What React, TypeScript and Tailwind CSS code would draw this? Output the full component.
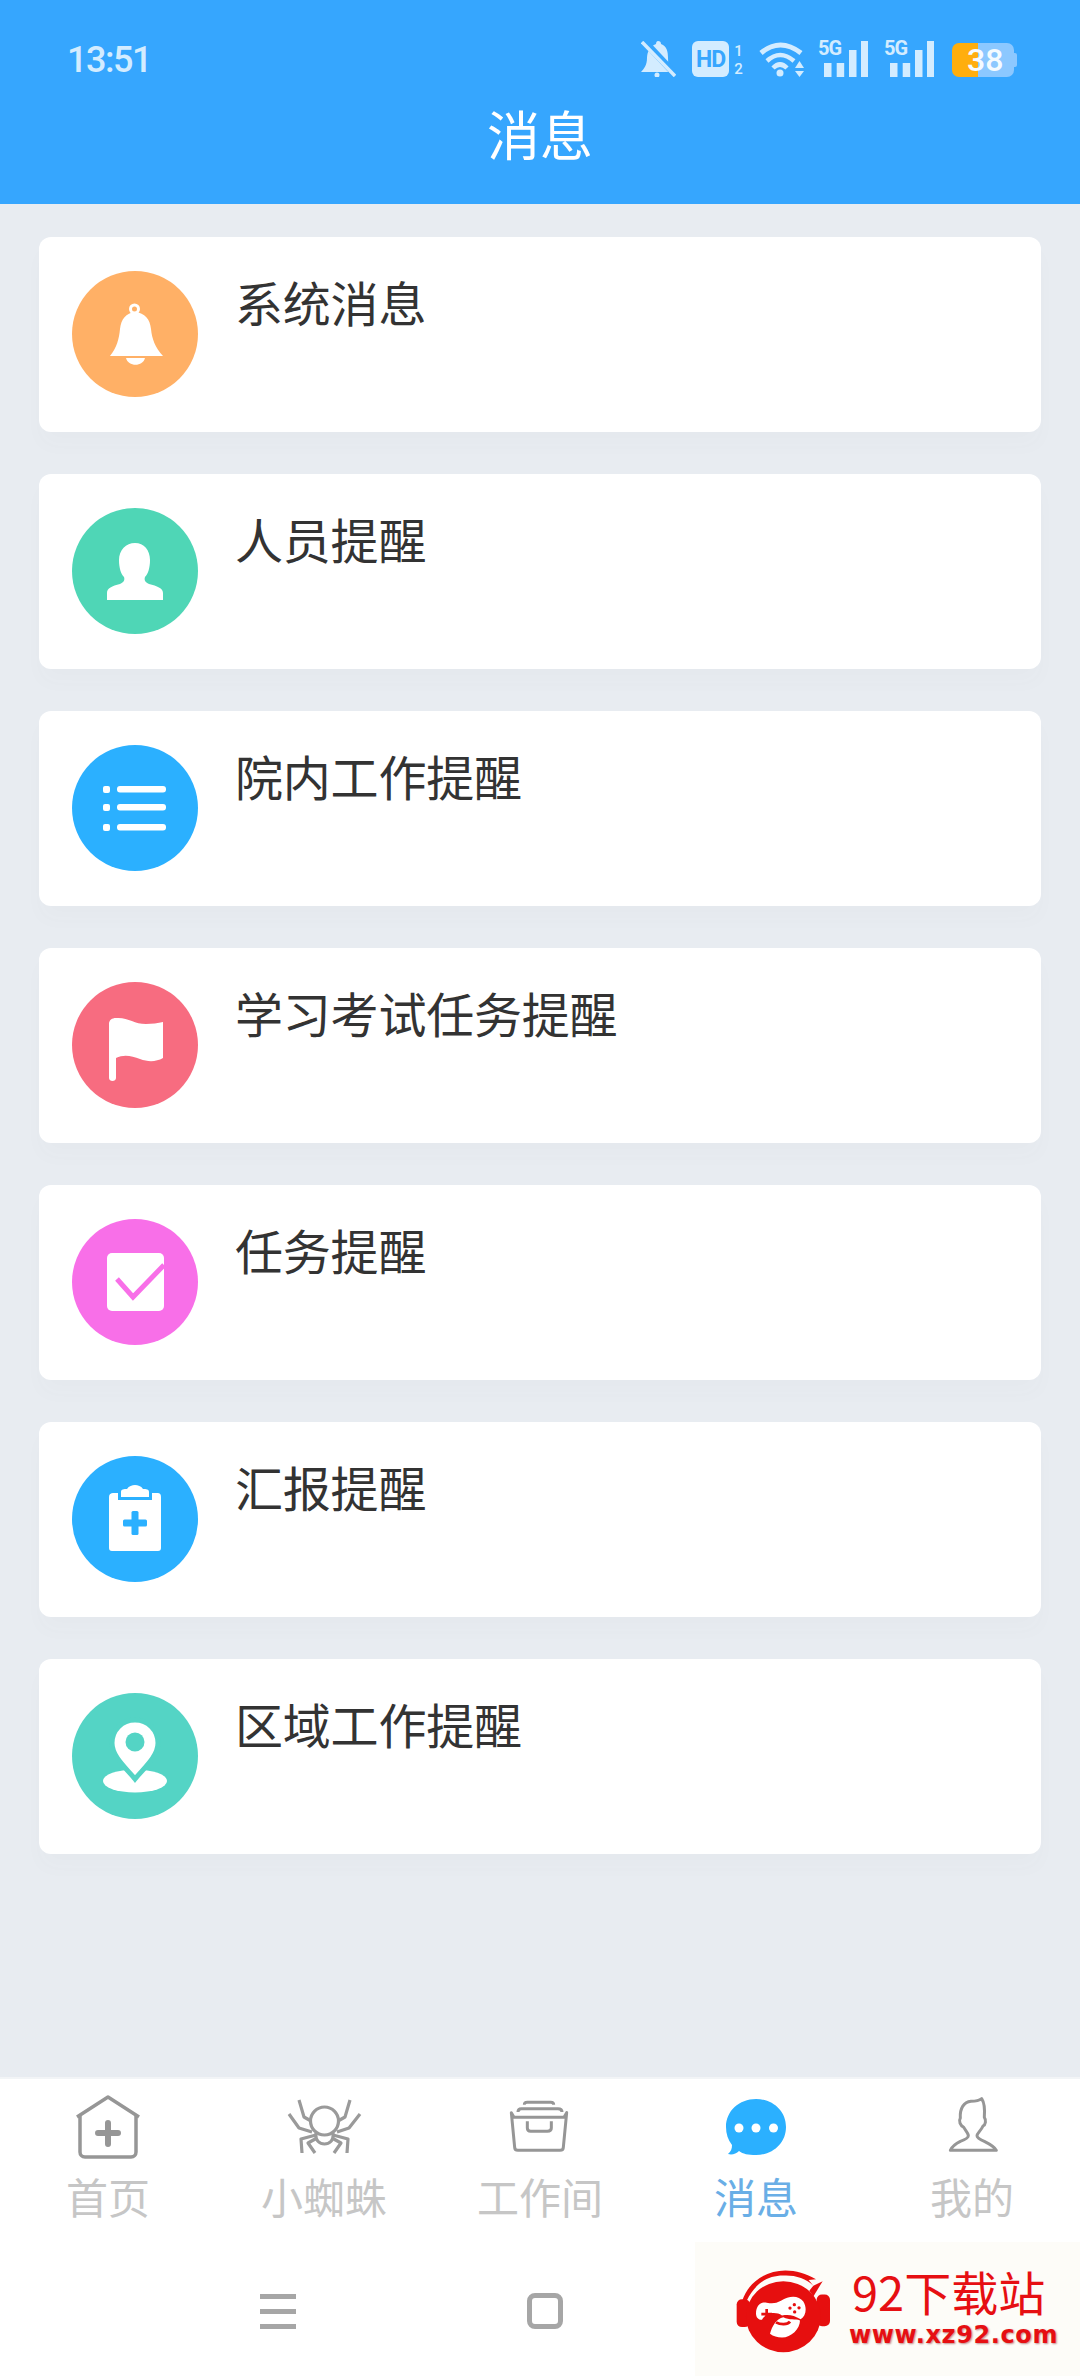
import React from 'react';

const cjk = "font-['Noto_Sans_CJK_SC',sans-serif]";

const BellIcon = () => (
  <svg viewBox="0 0 126 126" className="w-full h-full">
    <circle cx="62.5" cy="38" r="4" fill="none" stroke="#fff" strokeWidth="3" />
    <path d="M38 85C45 76 47 68 48 58C49 48 54 42 63 41C73 42 78 48 79 58C80 68 83 76 91 85Z" fill="#fff" />
    <path d="M54 87H73C71 96 56 96 54 87Z" fill="#fff" />
  </svg>
);

const PersonIcon = () => (
  <svg viewBox="0 0 126 126" className="w-full h-full">
    <path
      d="M35 92V85C35 80 40 78 48 76C52 74 53 72 52 69C49 66 47 60 47 52C47 42 54 35 63 35C72 35 78 42 78 52C78 60 76 66 73 69C72 72 73 74 77 76C85 78 91 80 91 85V92Z"
      fill="#fff"
    />
  </svg>
);

const ListIcon = () => (
  <svg viewBox="0 0 126 126" className="w-full h-full" fill="#fff">
    <rect x="31" y="41" width="7" height="7" rx="2" />
    <rect x="31" y="59" width="7" height="7" rx="2" />
    <rect x="31" y="79" width="7" height="7" rx="2" />
    <rect x="45" y="41" width="49" height="6.5" rx="3" />
    <rect x="45" y="59" width="49" height="6.5" rx="3" />
    <rect x="45" y="79" width="49" height="6.5" rx="3" />
  </svg>
);

const FlagIcon = () => (
  <svg viewBox="0 0 126 126" className="w-full h-full">
    <path
      d="M37 42C37 38 40 36 44 36C56 35 62 42 74 42C80 42 86 41 91 40V76C84 80 76 80 68 77C60 74 52 72 44 76V96C44 100 37 100 37 96Z"
      fill="#fff"
    />
  </svg>
);

const CheckIcon = () => (
  <svg viewBox="0 0 126 126" className="w-full h-full">
    <rect x="35" y="34" width="57" height="58" rx="5" fill="#fff" />
    <path d="M45 60L61 78L92 46" fill="none" stroke="#f86fe8" strokeWidth="5" />
  </svg>
);

const ClipboardIcon = () => (
  <svg viewBox="0 0 126 126" className="w-full h-full" fill="#fff">
    <path d="M37 41C37 38 39 37 41 37H46V44H80V37H85C88 37 89 38 89 41V92C89 94 88 95 86 95H40C38 95 37 94 37 92Z" />
    <path d="M49 41V36C49 33 52 33 55 33C57 30 60 29 63 29C66 29 69 30 71 33C74 33 77 33 77 36V41Z" />
    <rect x="51" y="63.5" width="24" height="7" rx="1.5" fill="#2bb0ff" />
    <rect x="59.5" y="55" width="7" height="24" rx="1.5" fill="#2bb0ff" />
  </svg>
);

const PinIcon = () => (
  <svg viewBox="0 0 126 126" className="w-full h-full">
    <ellipse cx="63" cy="88" rx="32" ry="11.5" fill="#fff" />
    <path d="M63 86C55 76 40 64 40 50C40 37 50 27 63 27C76 27 86 37 86 50C86 64 71 76 63 86Z" fill="#fff" stroke="#54d4c5" strokeWidth="5" />
    <circle cx="63" cy="49" r="9.5" fill="#54d4c5" />
  </svg>
);

const items = [
  { title: '系统消息', color: 'bg-[#ffb066]', Icon: BellIcon },
  { title: '人员提醒', color: 'bg-[#4fd6b6]', Icon: PersonIcon },
  { title: '院内工作提醒', color: 'bg-[#2bb0ff]', Icon: ListIcon },
  { title: '学习考试任务提醒', color: 'bg-[#f76c80]', Icon: FlagIcon },
  { title: '任务提醒', color: 'bg-[#f86fe8]', Icon: CheckIcon },
  { title: '汇报提醒', color: 'bg-[#2bb0ff]', Icon: ClipboardIcon },
  { title: '区域工作提醒', color: 'bg-[#54d4c5]', Icon: PinIcon },
];

const Signal = () => (
  <div className="relative w-[50px] h-[36px]">
    <svg viewBox="0 0 50 36" className="w-full h-full" fill="#d3ecff">
      <rect x="6" y="22" width="7.5" height="14" />
      <rect x="18.7" y="22" width="7.5" height="14" />
      <rect x="31" y="9" width="7.5" height="27" />
      <rect x="43" y="0" width="7.5" height="36" />
    </svg>
    <span className="absolute left-0 top-[-2px] text-[20px] leading-[18px] font-bold tracking-[-1px] text-[#d3ecff] font-['Roboto',sans-serif]">
      5G
    </span>
  </div>
);

const StatusBar = () => (
  <div className="flex items-start justify-between pl-[67px] pr-[63px] pt-[41px] h-[77px] text-[#d3ecff] font-['Roboto',sans-serif]">
    <span className="text-[36px] leading-[36px] font-medium tracking-[-1.5px] mt-[1px]">13:51</span>
    <div className="flex items-start">
      <svg viewBox="0 0 35 36" className="w-[35px] h-[36px]">
        <path d="M17 0C19 0 20 1 20 3C26 5 27 11 27 17C27 23 28 28 30 31H0C3 28 6 24 6 17C6 11 9 5 15 3C15 1 16 0 17 0Z" fill="#d3ecff" />
        <circle cx="16" cy="34" r="2.5" fill="#d3ecff" />
        <path d="M3 0L35 34" stroke="#36a6fe" strokeWidth="7" />
        <path d="M1 1L34 35" stroke="#d3ecff" strokeWidth="3.5" />
      </svg>
      <div className="ml-[16px] w-[37px] h-[36px] rounded-[6px] bg-[#d3ecff] flex items-center justify-center text-[#36a6fe] text-[23px] leading-none font-bold tracking-[-1px]">
        HD
      </div>
      <div className="ml-[5px] w-[9px] h-[36px] flex flex-col justify-between items-center text-[15px] leading-[15px] font-medium pt-[3px]">
        <span>1</span>
        <span>2</span>
      </div>
      <svg viewBox="0 0 45 36" className="ml-[16px] w-[45px] h-[36px]" fill="none" stroke="#d3ecff">
        <path d="M2 12Q21 -4 42 12" strokeWidth="5" />
        <path d="M8 20Q21 8 35 20" strokeWidth="4.5" />
        <path d="M14 27Q21 20 28 27" strokeWidth="4.5" />
        <circle cx="21" cy="32" r="3.5" fill="#d3ecff" stroke="none" />
        <path d="M36 27L40.5 20L45 27Z" fill="#d3ecff" stroke="none" />
        <path d="M36 30L40.5 36L45 30Z" fill="#d3ecff" stroke="none" />
      </svg>
      <div className="ml-[14px]">
        <Signal />
      </div>
      <div className="ml-[16px]">
        <Signal />
      </div>
      <div className="ml-[18px] mt-[2px] relative w-[65px] h-[34px] flex">
        <div className="w-[26px] h-full bg-[#ffae0d] rounded-l-[7px]" />
        <div className="w-[36px] h-full bg-[#8cc8ff] rounded-r-[7px]" />
        <div className="w-[3px] h-[14px] mt-[10px] bg-[#8cc8ff] rounded-r-[2px]" />
        <span className="absolute left-[15px] top-0 h-full flex items-center text-[32px] leading-none font-medium text-[#f5fbff]">
          38
        </span>
      </div>
    </div>
  </div>
);

const HomeTab = () => (
  <svg viewBox="0 0 100 80" className="w-[100px] h-[80px]" fill="none" stroke="#969696" strokeWidth="3.5" strokeLinejoin="round">
    <path d="M19 29L50 9L81 29" />
    <path d="M22 27V64C22 67 24 69 27 69H73C76 69 78 67 78 64V27" />
    <path d="M40 45H60M50 35V56" strokeWidth="6" strokeLinecap="round" />
  </svg>
);

const SpiderTab = () => (
  <svg viewBox="0 0 100 80" className="w-[100px] h-[80px]" fill="none" stroke="#9a9a9a" strokeWidth="3.2" strokeLinejoin="round">
    <g transform="translate(1 0)">
      <circle cx="49.5" cy="33" r="14" />
      <path d="M41 45C40 53 45 56 49.5 56C54 56 59 53 58 45" />
      <path d="M24 12L29 29L36 33M14 26L24 40L37 44M27 65L26 51L41 47M40 65L33 55L42 50" />
      <path d="M75 12L70 29L63 33M85 26L74 40L62 44M72 65L73 51L58 47M59 65L66 55L57 50" />
    </g>
  </svg>
);

const BoxTab = () => (
  <svg viewBox="0 0 300 240" className="w-[100px] h-[80px]" fill="none" stroke="#969696" strokeWidth="9" strokeLinejoin="round">
    <path d="M103 50C103 44 106 43 112 43H182C188 43 191 45 191 50" />
    <path d="M84 72C84 64 88 62 94 62H204C212 62 216 66 216 72" />
    <path d="M64 74L72 88H222L230 74L220 178C220 184 216 187 210 187H84C78 187 74 184 74 178Z" />
    <path d="M112 100V120C112 127 116 130 122 130H172C180 130 184 127 184 120V100" />
  </svg>
);

const ChatTab = () => (
  <svg viewBox="0 0 100 80" className="w-[100px] h-[80px]">
    <path d="M50 11C67 11 80 23 80 39C80 55 67 67 50 67C42 67 37 66 33 63C30 66 26 67 22 66C25 63 26 61 26 57C22 52 20 46 20 39C20 23 33 11 50 11Z" fill="#2bb0ff" />
    <circle cx="33" cy="40" r="4.5" fill="#fff" />
    <circle cx="50" cy="40" r="4.5" fill="#fff" />
    <circle cx="67.5" cy="40" r="4.5" fill="#fff" />
  </svg>
);

const MeTab = () => (
  <svg viewBox="0 0 300 240" className="w-[100px] h-[80px]" fill="none" stroke="#969696" strokeWidth="9" strokeLinejoin="round">
    <g transform="translate(-3 3)">
      <path d="M88 184C92 175 102 165 118 157C134 151 142 147 142 140C142 133 134 125 128 115C118 109 112 97 118 87C116 59 128 39 150 37C162 37 172 37 182 29C190 41 192 59 190 85C196 93 194 107 186 111C180 125 168 133 168 140C168 147 176 151 190 157C206 165 222 175 226 184Z" />
    </g>
  </svg>
);

const tabs = [
  { label: '首页', Icon: HomeTab },
  { label: '小蜘蛛', Icon: SpiderTab },
  { label: '工作间', Icon: BoxTab },
  { label: '消息', Icon: ChatTab, active: true },
  { label: '我的', Icon: MeTab },
];

const Logo = () => (
  <svg viewBox="0 0 345 300" preserveAspectRatio="none" className="w-[115px] h-[95px] shrink-0">
    <rect x="32" y="105" width="40" height="88" rx="16" fill="#e60f0f" />
    <rect x="272" y="90" width="40" height="100" rx="16" fill="#e60f0f" />
    <path d="M48 112C66 50 120 14 178 14C210 14 240 24 270 42L248 44L262 62C240 38 205 28 172 30C120 30 85 60 62 110Z" fill="#e60f0f" />
    <path d="M262 62L290 48L262 96L250 78Z" fill="#e60f0f" />
    <circle cx="172" cy="160" r="112" fill="#e60f0f" />
    <path d="M90 150C90 128 102 112 122 116C140 120 150 118 165 110C190 92 218 92 232 112C244 132 240 158 224 168C204 156 190 152 168 156C148 142 118 148 108 170C96 170 90 162 90 150Z" fill="#fff" />
    <path d="M132 214C138 190 152 166 172 162C190 172 208 166 222 172C222 198 196 226 168 226C154 226 142 222 132 214Z" fill="#fff" />
    <path d="M150 178C164 186 184 186 192 176" stroke="#e60f0f" strokeWidth="9" fill="none" />
    <path d="M106 152H138M122 136V168" stroke="#e60f0f" strokeWidth="8" />
    <circle cx="205" cy="122" r="5" fill="#e60f0f" />
    <circle cx="219" cy="132" r="5" fill="#e60f0f" />
    <circle cx="192" cy="133" r="5" fill="#e60f0f" />
    <circle cx="206" cy="145" r="5" fill="#e60f0f" />
  </svg>
);

const App = () => {
  return (
    <div className={`w-[1080px] h-[2376px] flex flex-col bg-[#e8ecf1] overflow-hidden ${cjk}`}>
      <header className="h-[204px] bg-[#36a6fe] flex flex-col">
        <StatusBar />
        <h1 className="text-[53px] leading-[60px] mt-[26px] text-center font-normal text-white">消息</h1>
      </header>

      <main className="flex-1 px-[39px] pt-[33px] flex flex-col gap-[42px]">
        {items.map(({ title, color, Icon }) => (
          <div
            key={title}
            className="h-[195px] bg-white rounded-[12px] flex items-start pl-[33px] pt-[34px] shadow-[0_14px_20px_rgba(120,110,100,0.02)]"
          >
            <div className={`w-[126px] h-[126px] rounded-full ${color}`}>
              <Icon />
            </div>
            <span className="ml-[37px] -mt-[2px] text-[48px] leading-[64px] text-[#333333] tracking-[-0.2px]">{title}</span>
          </div>
        ))}
      </main>

      <nav className="relative h-[299px] bg-white border-t-[2px] border-[#f2f4f6]">
        <div className="grid grid-cols-5 pt-[9px]">
          {tabs.map(({ label, Icon, active }) => (
            <div key={label} className="flex flex-col items-center">
              <Icon />
              <span className={`text-[42px] leading-[54px] mt-[1px] ${active ? 'text-[#69aee6]' : 'text-[#c6c6c6]'}`}>
                {label}
              </span>
            </div>
          ))}
        </div>
        <div className="flex items-center pl-[260px] mt-[70px]">
          <div className="w-[36px] h-[35px] flex flex-col justify-between">
            <div className="h-[5px] bg-[#a6a6a6]" />
            <div className="h-[5px] bg-[#a6a6a6]" />
            <div className="h-[5px] bg-[#a6a6a6]" />
          </div>
          <div className="ml-[231px] w-[36px] h-[36px] rounded-[8px] border-[5px] border-[#a6a6a6]" />
        </div>
        <div className="absolute left-[695px] right-0 top-[163px] bottom-0 bg-[#fdfcf8] flex items-start pl-[31px] pt-[24px]">
          <Logo />
          <div className="ml-[8px] -mt-[3px] flex flex-col items-start">
            <span className="ml-[3px] text-[47px] leading-[56px] whitespace-nowrap text-[#e60f12]">92下载站</span>
            <span className="mt-[4px] text-[24px] leading-[24px] font-bold tracking-[0.6px] whitespace-nowrap text-[#e60f12] font-['DejaVu_Sans',sans-serif] [text-shadow:1px_1px_2px_rgba(120,0,0,0.45)]">
              www.xz92.com
            </span>
          </div>
        </div>
      </nav>
    </div>
  );
};

export default App;
